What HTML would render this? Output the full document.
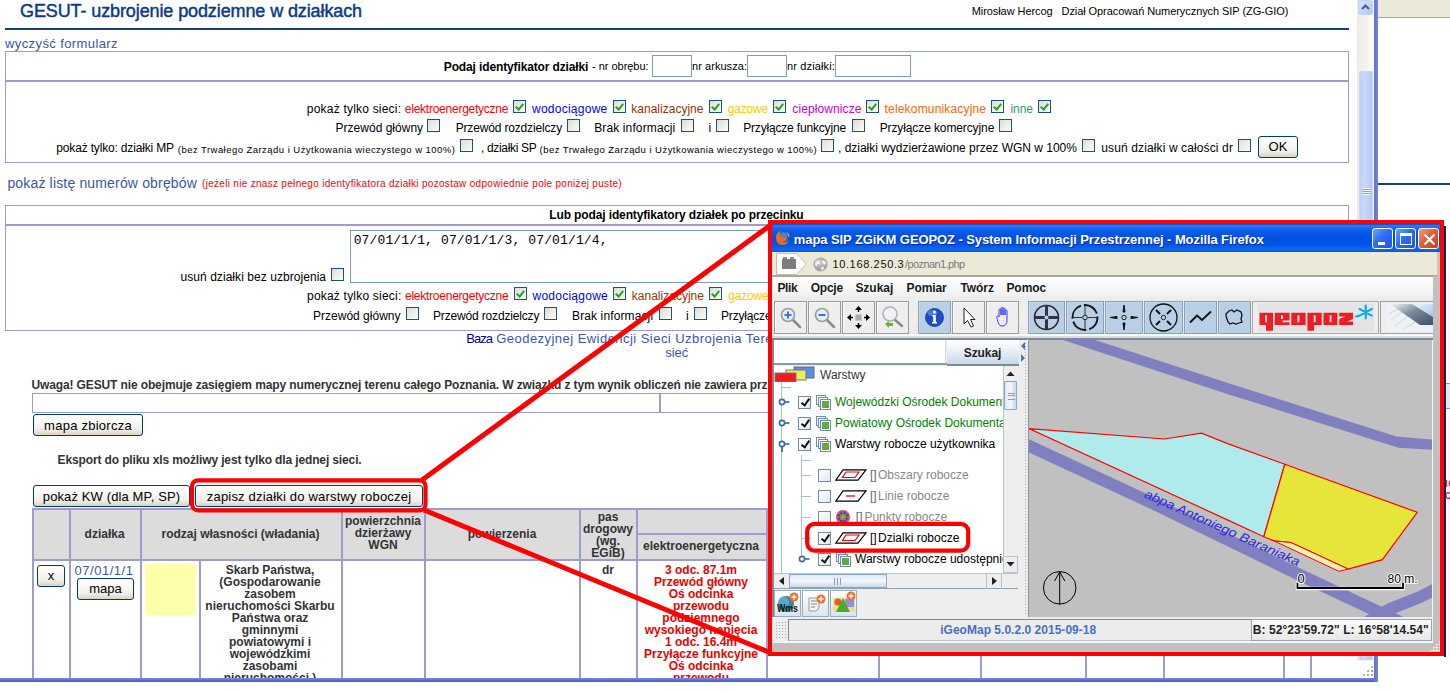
<!DOCTYPE html>
<html><head><meta charset="utf-8"><style>
html,body{margin:0;padding:0}
body{width:1450px;height:692px;position:relative;overflow:hidden;background:#fff;font-family:"Liberation Sans",sans-serif;color:#000}
.a{position:absolute}
.t{position:absolute;white-space:nowrap;line-height:1}
.cb{position:absolute;width:13px;height:13px;box-sizing:border-box;border:1px solid #1c5180;background:linear-gradient(135deg,#dcdcd7 0%,#ececE6 45%,#fbfbf9 100%)}
.cb.ck::after{content:"";position:absolute;left:3px;top:1px;width:3px;height:6px;border-right:2px solid #21a121;border-bottom:2px solid #21a121;transform:rotate(40deg)}
.btn{position:absolute;box-sizing:border-box;border:1px solid #003c74;border-radius:3px;background:linear-gradient(#fff 0%,#f7f6f2 45%,#eeede8 75%,#d8d2c6 100%);white-space:nowrap;text-align:center;color:#000}
.jcb{position:absolute;width:13px;height:13px;box-sizing:border-box;border:1px solid #7a8a99;background:linear-gradient(135deg,#fff 0%,#dde8f3 100%)}
.jcb.jck::after{content:"";position:absolute;left:4px;top:0px;width:3px;height:7px;border-right:2px solid #111;border-bottom:2px solid #111;transform:rotate(35deg)}
</style></head><body>
<div class="t" style="left:20.00px;top:2.06px;font-size:18px;color:#0b3a86;letter-spacing:-0.107px;-webkit-text-stroke:0.45px #0b3a86;">GESUT- uzbrojenie podziemne w działkach</div>
<div class="t" style="left:971.70px;top:5.69px;font-size:11px;letter-spacing:-0.070px;">Mirosław Hercog   Dział Opracowań Numerycznych SIP (ZG-GIO)</div>
<div class="a" style="left:5px;top:28px;width:1344px;height:2px;background:#1a3f7e;"></div>
<div class="t" style="left:5.00px;top:36.60px;font-size:13px;color:#3a56a8;letter-spacing:0.401px;">wyczyść formularz</div>
<div class="a" style="left:5px;top:51px;width:1344px;height:112px;border:1px solid #9c9ccf;box-sizing:border-box;"></div>
<div class="a" style="left:5px;top:80px;width:1344px;height:2px;background:#9c9ccf;"></div>
<div class="t" style="left:443.80px;top:60.54px;font-size:12px;font-weight:bold;letter-spacing:-0.131px;">Podaj identyfikator działki</div>
<div class="t" style="left:592.00px;top:61.39px;font-size:11px;letter-spacing:-0.022px;">- nr obrębu:</div>
<div class="a" style="left:652px;top:55px;width:40px;height:22px;border:1px solid #7f9db9;box-sizing:border-box;"></div>
<div class="t" style="left:692.00px;top:61.39px;font-size:11px;letter-spacing:0.054px;">nr arkusza:</div>
<div class="a" style="left:747px;top:55px;width:40px;height:22px;border:1px solid #7f9db9;box-sizing:border-box;"></div>
<div class="t" style="left:787.00px;top:61.39px;font-size:11px;letter-spacing:0.140px;">nr działki:</div>
<div class="a" style="left:835px;top:55px;width:76px;height:22px;border:1px solid #7f9db9;box-sizing:border-box;"></div>
<div class="t" style="left:306.80px;top:102.84px;font-size:12px;letter-spacing:0.208px;">pokaż tylko sieci: </div>
<div class="t" style="left:404.80px;top:102.84px;font-size:12px;color:#ff0000;letter-spacing:-0.246px;">elektroenergetyczne</div>
<div class="cb ck" style="left:513px;top:100px"></div>
<div class="t" style="left:532.00px;top:102.84px;font-size:12px;color:#0000ff;letter-spacing:0.253px;">wodociągowe</div>
<div class="cb ck" style="left:612.5px;top:100px"></div>
<div class="t" style="left:631.30px;top:102.84px;font-size:12px;color:#993300;letter-spacing:0.012px;">kanalizacyjne</div>
<div class="cb ck" style="left:708.5px;top:100px"></div>
<div class="t" style="left:727.70px;top:102.84px;font-size:12px;color:#ffcc00;letter-spacing:-0.177px;">gazowe</div>
<div class="cb ck" style="left:773px;top:100px"></div>
<div class="t" style="left:792.30px;top:102.84px;font-size:12px;color:#cc00cc;letter-spacing:0.097px;">ciepłownicze</div>
<div class="cb ck" style="left:866.4px;top:100px"></div>
<div class="t" style="left:884.60px;top:102.84px;font-size:12px;color:#ff6600;letter-spacing:0.169px;">telekomunikacyjne</div>
<div class="cb ck" style="left:991.2px;top:100px"></div>
<div class="t" style="left:1010.40px;top:102.84px;font-size:12px;color:#339966;letter-spacing:-0.022px;">inne</div>
<div class="cb ck" style="left:1038.3px;top:100px"></div>
<div class="t" style="left:335.60px;top:121.54px;font-size:12px;letter-spacing:0.009px;">Przewód główny</div>
<div class="cb" style="left:427px;top:119px"></div>
<div class="t" style="left:455.70px;top:121.54px;font-size:12px;letter-spacing:-0.162px;">Przewód rozdzielczy</div>
<div class="cb" style="left:566.8px;top:119px"></div>
<div class="t" style="left:594.20px;top:121.54px;font-size:12px;letter-spacing:0.123px;">Brak informacji</div>
<div class="cb" style="left:681px;top:119px"></div>
<div class="t" style="left:708.50px;top:121.54px;font-size:12px;">i</div>
<div class="cb" style="left:715.8px;top:119px"></div>
<div class="t" style="left:743.20px;top:121.54px;font-size:12px;letter-spacing:-0.176px;">Przyłącze funkcyjne</div>
<div class="cb" style="left:851.5px;top:119px"></div>
<div class="t" style="left:879.70px;top:121.54px;font-size:12px;letter-spacing:-0.110px;">Przyłącze komercyjne</div>
<div class="cb" style="left:999.2px;top:119px"></div>
<div class="t" style="left:56.30px;top:141.64px;font-size:12px;letter-spacing:-0.169px;">pokaż tylko: działki MP</div>
<div class="t" style="left:177.80px;top:144.56px;font-size:9.5px;letter-spacing:0.457px;">(bez Trwałego Zarządu i Użytkowania wieczystego w 100%)</div>
<div class="cb" style="left:459.6px;top:139px"></div>
<div class="t" style="left:481.00px;top:141.64px;font-size:12px;letter-spacing:-0.338px;">, działki SP</div>
<div class="t" style="left:539.60px;top:144.56px;font-size:9.5px;letter-spacing:0.457px;">(bez Trwałego Zarządu i Użytkowania wieczystego w 100%)</div>
<div class="cb" style="left:821px;top:139px"></div>
<div class="t" style="left:838.00px;top:141.64px;font-size:12px;letter-spacing:-0.013px;">, działki wydzierżawione przez WGN w 100%</div>
<div class="cb" style="left:1082px;top:139px"></div>
<div class="t" style="left:1101.30px;top:141.64px;font-size:12px;letter-spacing:0.119px;">usuń działki w całości dr</div>
<div class="cb" style="left:1237.8px;top:139px"></div>
<div class="btn" style="left:1258px;top:136px;width:40px;height:22px;font-size:13px;line-height:20px;letter-spacing:0px;">OK</div>
<div class="t" style="left:7.40px;top:176.05px;font-size:14px;color:#3a56a8;letter-spacing:0.163px;">pokaż listę numerów obrębów</div>
<div class="t" style="left:202.00px;top:179.44px;font-size:10px;color:#ff0000;letter-spacing:0.303px;">(jeżeli nie znasz pełnego identyfikatora działki pozostaw odpowiednie pole poniżej puste)</div>
<div class="a" style="left:5px;top:205px;width:1344px;height:126px;border:1px solid #9c9ccf;box-sizing:border-box;"></div>
<div class="a" style="left:5px;top:224px;width:1344px;height:2px;background:#9c9ccf;"></div>
<div class="t" style="left:549.30px;top:208.84px;font-size:12px;font-weight:bold;letter-spacing:-0.128px;">Lub podaj identyfikatory działek po przecinku</div>
<div class="t" style="left:180.50px;top:270.54px;font-size:12px;letter-spacing:0.056px;">usuń działki bez uzbrojenia</div>
<div class="cb" style="left:331px;top:268px"></div>
<div class="a" style="left:350px;top:230px;width:650px;height:53px;border:1px solid #7f9db9;box-sizing:border-box;"></div>
<div class="t" style="left:353.70px;top:233.84px;font-size:13px;font-family:'Liberation Mono',monospace;letter-spacing:0.136px;">07/01/1/1, 07/01/1/3, 07/01/1/4,</div>
<div class="t" style="left:307.00px;top:289.64px;font-size:12px;letter-spacing:0.208px;">pokaż tylko sieci: </div>
<div class="t" style="left:405.00px;top:289.64px;font-size:12px;color:#ff0000;letter-spacing:-0.246px;">elektroenergetyczne</div>
<div class="cb ck" style="left:513.5px;top:287px"></div>
<div class="t" style="left:532.50px;top:289.64px;font-size:12px;color:#0000ff;letter-spacing:0.253px;">wodociągowe</div>
<div class="cb ck" style="left:613px;top:287px"></div>
<div class="t" style="left:631.80px;top:289.64px;font-size:12px;color:#993300;letter-spacing:0.012px;">kanalizacyjne</div>
<div class="cb ck" style="left:709px;top:287px"></div>
<div class="t" style="left:728.20px;top:289.64px;font-size:12px;color:#ffcc00;letter-spacing:-0.177px;">gazowe</div>
<div class="cb ck" style="left:773.5px;top:287px"></div>
<div class="t" style="left:313.00px;top:309.54px;font-size:12px;letter-spacing:0.009px;">Przewód główny</div>
<div class="cb" style="left:405.6px;top:307px"></div>
<div class="t" style="left:433.00px;top:309.54px;font-size:12px;letter-spacing:-0.162px;">Przewód rozdzielczy</div>
<div class="cb" style="left:544px;top:307px"></div>
<div class="t" style="left:572.00px;top:309.54px;font-size:12px;letter-spacing:0.123px;">Brak informacji</div>
<div class="cb" style="left:659px;top:307px"></div>
<div class="t" style="left:686.00px;top:309.54px;font-size:12px;">i</div>
<div class="cb" style="left:693.5px;top:307px"></div>
<div class="t" style="left:721.00px;top:309.54px;font-size:12px;letter-spacing:-0.176px;">Przyłącze funkcyjne</div>
<div class="t" style="left:466.30px;top:332.30px;font-size:13px;color:#000099;letter-spacing:-0.983px;">Baza</div>
<div class="t" style="left:496.30px;top:332.30px;font-size:13px;color:#3a56a8;letter-spacing:0.456px;">Geodezyjnej Ewidencji Sieci Uzbrojenia Terenu</div>
<div class="t" style="left:665.24px;top:346.40px;font-size:13px;color:#3a56a8;">sieć</div>
<div class="t" style="left:31.40px;top:378.64px;font-size:12px;font-weight:bold;color:#333333;letter-spacing:-0.120px;">Uwaga! GESUT nie obejmuje zasięgiem mapy numerycznej terenu całego Poznania. W związku z tym wynik obliczeń nie zawiera przewodów</div>
<div class="a" style="left:32px;top:393px;width:1317px;height:20px;border:1px solid #9c9ccf;box-sizing:border-box;"></div>
<div class="a" style="left:659px;top:393px;width:2px;height:20px;background:#9c9ccf;"></div>
<div class="btn" style="left:33px;top:414px;width:110px;height:22px;font-size:13px;line-height:20px;letter-spacing:0.25px;padding-top:1px;">mapa zbiorcza</div>
<div class="t" style="left:57.60px;top:454.44px;font-size:12px;font-weight:bold;color:#333333;letter-spacing:-0.131px;">Eksport do pliku xls możliwy jest tylko dla jednej sieci.</div>
<div class="btn" style="left:33px;top:485px;width:157px;height:22px;font-size:13px;line-height:20px;letter-spacing:0.12px;padding-top:1px;">pokaż KW (dla MP, SP)</div>
<div class="btn" style="left:195px;top:485px;width:228px;height:22px;font-size:13px;line-height:20px;letter-spacing:0.19px;padding-top:1px;">zapisz działki do warstwy roboczej</div>
<div class="a" style="left:32px;top:508px;width:1346px;height:52px;background:#dcdcdc;"></div>
<div class="a" style="left:32px;top:508px;width:2px;height:172px;background:#9c9ccf;"></div>
<div class="a" style="left:69px;top:508px;width:2px;height:172px;background:#9c9ccf;"></div>
<div class="a" style="left:140px;top:508px;width:2px;height:172px;background:#9c9ccf;"></div>
<div class="a" style="left:341px;top:508px;width:2px;height:172px;background:#9c9ccf;"></div>
<div class="a" style="left:424px;top:508px;width:2px;height:172px;background:#9c9ccf;"></div>
<div class="a" style="left:579px;top:508px;width:2px;height:172px;background:#9c9ccf;"></div>
<div class="a" style="left:636px;top:508px;width:2px;height:172px;background:#9c9ccf;"></div>
<div class="a" style="left:766px;top:508px;width:2px;height:172px;background:#9c9ccf;"></div>
<div class="a" style="left:878px;top:508px;width:2px;height:172px;background:#9c9ccf;"></div>
<div class="a" style="left:980px;top:508px;width:2px;height:172px;background:#9c9ccf;"></div>
<div class="a" style="left:1085px;top:508px;width:2px;height:172px;background:#9c9ccf;"></div>
<div class="a" style="left:1163px;top:508px;width:2px;height:172px;background:#9c9ccf;"></div>
<div class="a" style="left:1283px;top:508px;width:2px;height:172px;background:#9c9ccf;"></div>
<div class="a" style="left:1310px;top:508px;width:2px;height:172px;background:#9c9ccf;"></div>
<div class="a" style="left:32px;top:508px;width:1346px;height:2px;background:#9c9ccf;"></div>
<div class="a" style="left:32px;top:559px;width:1346px;height:2px;background:#9c9ccf;"></div>
<div class="a" style="left:636px;top:533px;width:742px;height:2px;background:#9c9ccf;"></div>
<div class="a" style="left:199px;top:561px;width:2px;height:119px;background:#9c9ccf;"></div>
<div class="t" style="left:84.59px;top:527.54px;font-size:12px;font-weight:bold;color:#333;">działka</div>
<div class="t" style="left:161.48px;top:527.54px;font-size:12px;font-weight:bold;color:#333;">rodzaj własności (władania)</div>
<div class="t" style="left:344.99px;top:515.44px;font-size:12px;font-weight:bold;color:#333;">powierzchnia</div>
<div class="t" style="left:354.65px;top:527.34px;font-size:12px;font-weight:bold;color:#333;">dzierżawy</div>
<div class="t" style="left:368.34px;top:539.34px;font-size:12px;font-weight:bold;color:#333;">WGN</div>
<div class="t" style="left:467.66px;top:527.54px;font-size:12px;font-weight:bold;color:#333;">powierzenia</div>
<div class="t" style="left:597.66px;top:510.84px;font-size:12px;font-weight:bold;color:#333;">pas</div>
<div class="t" style="left:583.00px;top:522.84px;font-size:12px;font-weight:bold;color:#333;">drogowy</div>
<div class="t" style="left:596.00px;top:534.84px;font-size:12px;font-weight:bold;color:#333;">(wg.</div>
<div class="t" style="left:591.33px;top:546.84px;font-size:12px;font-weight:bold;color:#333;">EGiB)</div>
<div class="t" style="left:642.97px;top:539.84px;font-size:12px;font-weight:bold;color:#333;">elektroenergetyczna</div>
<div class="btn" style="left:37px;top:565px;width:28px;height:22px;font-size:13px;line-height:20px;letter-spacing:0px;">x</div>
<div class="t" style="left:74.50px;top:563.70px;font-size:13px;color:#3a56a8;letter-spacing:0.532px;">07/01/1/1</div>
<div class="btn" style="left:77px;top:578px;width:57px;height:22px;font-size:13px;line-height:20px;letter-spacing:0px;">mapa</div>
<div class="a" style="left:145px;top:564px;width:51px;height:51px;background:#ffffaa;"></div>
<div class="t" style="left:225.65px;top:563.74px;font-size:12px;font-weight:bold;color:#333;">Skarb Państwa,</div>
<div class="t" style="left:219.33px;top:575.74px;font-size:12px;font-weight:bold;color:#333;">(Gospodarowanie</div>
<div class="t" style="left:244.32px;top:587.74px;font-size:12px;font-weight:bold;color:#333;">zasobem</div>
<div class="t" style="left:205.31px;top:599.74px;font-size:12px;font-weight:bold;color:#333;">nieruchomości Skarbu</div>
<div class="t" style="left:231.65px;top:611.74px;font-size:12px;font-weight:bold;color:#333;">Państwa oraz</div>
<div class="t" style="left:241.66px;top:623.74px;font-size:12px;font-weight:bold;color:#333;">gminnymi</div>
<div class="t" style="left:228.99px;top:635.74px;font-size:12px;font-weight:bold;color:#333;">powiatowymi i</div>
<div class="t" style="left:229.66px;top:647.74px;font-size:12px;font-weight:bold;color:#333;">wojewódzkimi</div>
<div class="t" style="left:242.66px;top:659.74px;font-size:12px;font-weight:bold;color:#333;">zasobami</div>
<div class="t" style="left:223.66px;top:671.74px;font-size:12px;font-weight:bold;color:#333;">nieruchomości )</div>
<div class="t" style="left:602.00px;top:563.74px;font-size:12px;font-weight:bold;color:#333;">dr</div>
<div class="t" style="left:664.98px;top:563.74px;font-size:12px;font-weight:bold;color:#ee0000;">3 odc. 87.1m</div>
<div class="t" style="left:653.99px;top:575.74px;font-size:12px;font-weight:bold;color:#ee0000;">Przewód główny</div>
<div class="t" style="left:668.65px;top:587.74px;font-size:12px;font-weight:bold;color:#ee0000;">Oś odcinka</div>
<div class="t" style="left:673.00px;top:599.74px;font-size:12px;font-weight:bold;color:#ee0000;">przewodu</div>
<div class="t" style="left:662.33px;top:611.74px;font-size:12px;font-weight:bold;color:#ee0000;">podziemnego</div>
<div class="t" style="left:644.64px;top:623.74px;font-size:12px;font-weight:bold;color:#ee0000;">wysokiego napięcia</div>
<div class="t" style="left:664.98px;top:635.74px;font-size:12px;font-weight:bold;color:#ee0000;">1 odc. 16.4m</div>
<div class="t" style="left:643.97px;top:647.74px;font-size:12px;font-weight:bold;color:#ee0000;">Przyłącze funkcyjne</div>
<div class="t" style="left:668.65px;top:659.74px;font-size:12px;font-weight:bold;color:#ee0000;">Oś odcinka</div>
<div class="t" style="left:673.00px;top:671.74px;font-size:12px;font-weight:bold;color:#ee0000;">przewodu</div>
<div class="a" style="left:0px;top:678px;width:1378px;height:4px;background:linear-gradient(#7b8ae0,#4a58c0);"></div>
<div class="a" style="left:0px;top:682px;width:1450px;height:10px;background:#fff;"></div>
<div class="a" style="left:1357px;top:0px;width:17px;height:661px;background:linear-gradient(90deg,#eeede5,#f3f1ec 50%,#fdfdfb);"></div>
<div class="a" style="left:1358px;top:0px;width:15px;height:15px;background:linear-gradient(135deg,#d4e2fe,#b4c8f6);border:1px solid #c2d4fa;box-sizing:border-box;border-radius:2px;"><svg class="a" style="left:0;top:0" width="13" height="13"><path d="M3 8 L6.5 4.5 L10 8" fill="none" stroke="#4d6185" stroke-width="2"/></svg></div>
<div class="a" style="left:1359px;top:71px;width:14px;height:589px;background:linear-gradient(90deg,#b9cffa,#c8d8fc 40%,#b0c6f4);border-radius:2px;box-shadow:inset 0 0 0 1px #c4d6fc;"><div class="a" style="left:3px;top:117px;width:8px;height:7px;background:repeating-linear-gradient(#eef3fe 0 1px,#8aa4dc 1px 2px)"></div></div>
<div class="a" style="left:1362px;top:665px;width:11px;height:11px;background:radial-gradient(circle,#b0ab98 1px,transparent 1.2px) 0 0/4px 4px;clip-path:polygon(100% 0,100% 100%,0 100%)"></div>
<div class="a" style="left:1374px;top:0px;width:4px;height:682px;background:linear-gradient(90deg,#5d6fd6,#7686dc);"></div>
<div class="a" style="left:1378px;top:0px;width:72px;height:18px;background:#ece9d8;border-bottom:1px solid #aca899;box-sizing:border-box;"></div>
<div class="a" style="left:1378px;top:183px;width:72px;height:2px;background:#1a3f7e;"></div>
<div class="a" style="left:1445px;top:383px;width:5px;height:26px;background:#e8e8e8;border:1px solid #8c8cd0;border-right:none;box-sizing:border-box;"></div>
<div class="t" style="left:1445.00px;top:476.84px;font-size:12px;color:#cc0000;">ıc</div>
<div class="t" style="left:1445.00px;top:488.84px;font-size:12px;color:#cc0000;">ci</div>
<div class="a" style="left:1444px;top:226px;width:2px;height:431px;background:#0a246a;"></div>
<div class="a" style="left:768px;top:220px;width:676px;height:436px;background:#c0c0c0;"></div>
<div class="a" style="left:772px;top:224px;width:668px;height:28px;background:linear-gradient(#0842c8 0%,#2f7cf4 6%,#1a68f0 14%,#0758e8 30%,#0050e0 55%,#0056ea 75%,#0a68f6 90%,#0a5ad8 100%);"></div>
<svg class="a" style="left:775px;top:230px" width="15" height="15" viewBox="0 0 15 15"><circle cx="8" cy="7" r="6.2" fill="#2a62b8"/><circle cx="8.5" cy="6" r="3.5" fill="#4a9ae0" opacity="0.7"/><path d="M1 8 C1 3 4 1 6 1.5 C4.5 3 4.5 5 6 6.5 C7.5 8 10 8.5 12 7.5 C11.5 10 9.5 12 7 12 C9 13 12 12.5 14 10 C13 13.5 10.5 15 7.5 15 C3.5 15 1 12 1 8Z" fill="#ee6a1c"/><path d="M11 1.5 C13 2.5 14.5 4.5 14.5 7 L13 6 C13 4 12 2.5 11 1.5Z" fill="#f5b52a"/></svg>
<div class="t" style="left:793.80px;top:233.00px;font-size:13px;font-weight:bold;color:#fff;letter-spacing:-0.089px;text-shadow:1px 1px 0 #0a2a8c;">mapa SIP ZGiKM GEOPOZ - System Informacji Przestrzennej - Mozilla Firefox</div>
<div class="a" style="left:1372px;top:228px;width:21px;height:21px;background:linear-gradient(135deg,#6fa0ff 0%,#2d6ef5 45%,#1a56e8 100%);border:1px solid #fff;box-sizing:border-box;border-radius:3px;"><div class="a" style="left:5px;top:13px;width:7px;height:3px;background:#fff"></div></div>
<div class="a" style="left:1395px;top:228px;width:21px;height:21px;background:linear-gradient(135deg,#6fa0ff 0%,#2d6ef5 45%,#1a56e8 100%);border:1px solid #fff;box-sizing:border-box;border-radius:3px;"><div class="a" style="left:4px;top:4px;width:12px;height:12px;box-sizing:border-box;border:1px solid #fff;border-top:3px solid #fff"></div></div>
<div class="a" style="left:1418px;top:228px;width:21px;height:21px;background:linear-gradient(135deg,#f0a080 0%,#e0603a 45%,#c8401c 100%);border:1px solid #fff;box-sizing:border-box;border-radius:3px;"><svg class="a" style="left:0;top:0" width="21" height="21"><path d="M5.5 5.5 L15.5 15.5 M15.5 5.5 L5.5 15.5" stroke="#fff" stroke-width="2.2"/></svg></div>
<div class="a" style="left:772px;top:252px;width:668px;height:25px;background:#ece9d8;border-bottom:2px solid #aca899;box-sizing:border-box;"></div>
<div class="a" style="left:1437px;top:252px;width:3px;height:24px;background:#c8c5b5;"></div>
<svg class="a" style="left:775px;top:253px" width="34" height="23"><path d="M1.5 0.5 H21.5 L31 11 L21.5 21.5 H1.5 Z" fill="#fff" stroke="#c5c2b2"/><rect x="7" y="6" width="14" height="10" fill="#7d7d7d"/><rect x="8" y="4" width="4" height="2" fill="#8a8a8a"/><rect x="15" y="4" width="4" height="2" fill="#8a8a8a"/></svg>
<svg class="a" style="left:813px;top:257px" width="15" height="15"><circle cx="7.5" cy="7.5" r="7" fill="#a8a8a8"/><circle cx="6" cy="5.5" r="4" fill="#c8c8c8" opacity="0.8"/><path d="M2.5 5 L5 3.5 L7.5 4.5 L6.5 7 L4 7.5 L3.5 10 L2 8Z M9 3 L12 4 L13 7 L11 8 L9.5 6Z M8 10 L11 9.5 L10.5 12.5 L8.5 13Z" fill="#f0f0f0"/></svg>
<div class="t" style="left:832.40px;top:259.19px;font-size:11px;color:#111;letter-spacing:0.647px;">10.168.250.3</div>
<div class="t" style="left:905.00px;top:259.19px;font-size:11px;color:#7a7a7a;letter-spacing:-0.598px;">/poznan1.php</div>
<div class="a" style="left:772px;top:277px;width:661px;height:23px;background:linear-gradient(#ffffff,#f4f4f4 60%,#ebebeb);"></div>
<div class="a" style="left:772px;top:300px;width:661px;height:38px;background:linear-gradient(#ececec,#f0f0f0 50%,#e6e6e6);"></div>
<div class="a" style="left:1433px;top:276px;width:7px;height:380px;background:#c0c0c0;"></div>
<div class="t" style="left:777.40px;top:282.04px;font-size:12px;font-weight:bold;color:#1a1a1a;letter-spacing:-0.337px;">Plik</div>
<div class="t" style="left:810.70px;top:282.04px;font-size:12px;font-weight:bold;color:#1a1a1a;letter-spacing:-0.230px;">Opcje</div>
<div class="t" style="left:855.40px;top:282.04px;font-size:12px;font-weight:bold;color:#1a1a1a;letter-spacing:-0.020px;">Szukaj</div>
<div class="t" style="left:906.60px;top:282.04px;font-size:12px;font-weight:bold;color:#1a1a1a;letter-spacing:-0.131px;">Pomiar</div>
<div class="t" style="left:960.50px;top:282.04px;font-size:12px;font-weight:bold;color:#1a1a1a;letter-spacing:-0.095px;">Twórz</div>
<div class="t" style="left:1006.40px;top:282.04px;font-size:12px;font-weight:bold;color:#1a1a1a;letter-spacing:-0.042px;">Pomoc</div>
<div class="a" style="left:774px;top:301px;width:33px;height:33px;background:#eeeeee;border:1px solid #9a9a9a;box-sizing:border-box;box-shadow:inset 1px 1px 0 #fafafa;"></div>
<div class="a" style="left:808px;top:301px;width:33px;height:33px;background:#eeeeee;border:1px solid #9a9a9a;box-sizing:border-box;box-shadow:inset 1px 1px 0 #fafafa;"></div>
<div class="a" style="left:842px;top:301px;width:33px;height:33px;background:#eeeeee;border:1px solid #9a9a9a;box-sizing:border-box;box-shadow:inset 1px 1px 0 #fafafa;"></div>
<div class="a" style="left:876px;top:301px;width:33px;height:33px;background:#eeeeee;border:1px solid #9a9a9a;box-sizing:border-box;box-shadow:inset 1px 1px 0 #fafafa;"></div>
<div class="a" style="left:952px;top:301px;width:33px;height:33px;background:#eeeeee;border:1px solid #9a9a9a;box-sizing:border-box;box-shadow:inset 1px 1px 0 #fafafa;"></div>
<div class="a" style="left:986px;top:301px;width:33px;height:33px;background:#eeeeee;border:1px solid #9a9a9a;box-sizing:border-box;box-shadow:inset 1px 1px 0 #fafafa;"></div>
<div class="a" style="left:918px;top:301px;width:33px;height:33px;background:#b8cfe5;border:1px solid #8aa0b6;box-sizing:border-box;box-shadow:inset 1px 1px 0 #c8dbee;"></div>
<div class="a" style="left:1028px;top:301px;width:37px;height:33px;background:#b8cfe5;border:1px solid #8aa0b6;box-sizing:border-box;box-shadow:inset 1px 1px 0 #c8dbee;"></div>
<div class="a" style="left:1066px;top:301px;width:38px;height:33px;background:#b8cfe5;border:1px solid #8aa0b6;box-sizing:border-box;box-shadow:inset 1px 1px 0 #c8dbee;"></div>
<div class="a" style="left:1105px;top:301px;width:38px;height:33px;background:#b8cfe5;border:1px solid #8aa0b6;box-sizing:border-box;box-shadow:inset 1px 1px 0 #c8dbee;"></div>
<div class="a" style="left:1144px;top:301px;width:39px;height:33px;background:#b8cfe5;border:1px solid #8aa0b6;box-sizing:border-box;box-shadow:inset 1px 1px 0 #c8dbee;"></div>
<div class="a" style="left:1184px;top:301px;width:33px;height:33px;background:#b8cfe5;border:1px solid #8aa0b6;box-sizing:border-box;box-shadow:inset 1px 1px 0 #c8dbee;"></div>
<div class="a" style="left:1218px;top:301px;width:33px;height:33px;background:#b8cfe5;border:1px solid #8aa0b6;box-sizing:border-box;box-shadow:inset 1px 1px 0 #c8dbee;"></div>
<div class="a" style="left:774px;top:334px;width:659px;height:2px;background:#f9f9f9;"></div>
<div class="a" style="left:774px;top:336px;width:659px;height:2px;background:#dcdcdc;"></div>
<svg class="a" style="left:774px;top:301px" width="33" height="33" viewBox="0 0 33 33"><line x1="19" y1="19" x2="26" y2="26" stroke="#8a8a8a" stroke-width="2.5" stroke-linecap="round"/><circle cx="14" cy="14" r="6.5" fill="#e4ecf6" stroke="#9a9a9a" stroke-width="1.6"/><path d="M10.5 14 H17.5 M14 10.5 V17.5" stroke="#3d78c8" stroke-width="2"/></svg>
<svg class="a" style="left:808px;top:301px" width="33" height="33" viewBox="0 0 33 33"><line x1="19" y1="19" x2="26" y2="26" stroke="#8a8a8a" stroke-width="2.5" stroke-linecap="round"/><circle cx="14" cy="14" r="6.5" fill="#e4ecf6" stroke="#9a9a9a" stroke-width="1.6"/><path d="M10.5 14 H17.5" stroke="#3d78c8" stroke-width="2"/></svg>
<svg class="a" style="left:842px;top:301px" width="33" height="33" viewBox="0 0 33 33"><rect x="13.5" y="13.5" width="6" height="6" fill="#a8b0b0" stroke="#c8c8c8"/><path d="M16.5 5 L13 9 H20 Z M16.5 28 L13 24 H20 Z M5 16.5 L9 13 V20 Z M28 16.5 L24 13 V20 Z" fill="#000"/><path d="M16.5 8 V11 M16.5 22 V25 M8 16.5 H11 M22 16.5 H25" stroke="#000" stroke-width="1.5"/></svg>
<svg class="a" style="left:876px;top:301px" width="33" height="33" viewBox="0 0 33 33"><line x1="18" y1="18" x2="26" y2="25" stroke="#8a8a8a" stroke-width="2.5" stroke-linecap="round"/><circle cx="14" cy="13" r="7" fill="#eef2f8" stroke="#b0b0b0" stroke-width="1.5"/><path d="M9 23 L13 20 V22 H17 V25 H13 V27 Z" fill="#6cb33a"/></svg>
<svg class="a" style="left:918px;top:301px" width="33" height="33" viewBox="0 0 33 33"><circle cx="16.5" cy="16.5" r="9" fill="#1a4fc8"/><circle cx="16.5" cy="16.5" r="9" fill="none" stroke="#0c3290" stroke-width="0.8"/><ellipse cx="14.5" cy="12" rx="5" ry="3" fill="#6c9cf0" opacity="0.6"/><circle cx="16.5" cy="11" r="1.5" fill="#fff"/><path d="M14.5 14 H17.8 V21 H19 V22.5 H14 V21 H15.2 V15.5 H14.5Z" fill="#fff"/></svg>
<svg class="a" style="left:952px;top:301px" width="33" height="33" viewBox="0 0 33 33"><path d="M12 7 V23 L15.5 19.5 L19 26 L21.5 25 L18.5 18.5 H23 Z" fill="#fff" stroke="#222" stroke-width="1"/></svg>
<svg class="a" style="left:986px;top:301px" width="33" height="33" viewBox="0 0 33 33"><path d="M11 17 C10 15 12 14 13 16 V9 C13 7.5 15 7.5 15 9 V14 V7.5 C15 6 17 6 17 7.5 V14 V8 C17 6.5 19 6.5 19 8 V14 V10 C19 8.5 21 8.5 21 10 V19 C21 23 19 25 16 25 C13 25 12 22 11 17Z" fill="#e8ecf8" stroke="#3a3ae8" stroke-width="1"/></svg>
<svg class="a" style="left:1028px;top:301px" width="37" height="33" viewBox="0 0 37 33"><circle cx="18.5" cy="16.5" r="12" fill="none" stroke="#222" stroke-width="1.5"/><path d="M18.5 4 V29 M6 16.5 H31" stroke="#334" stroke-width="3"/><circle cx="18.5" cy="16.5" r="2" fill="#b8cfe5"/></svg>
<svg class="a" style="left:1066px;top:301px" width="38" height="33" viewBox="0 0 38 33"><circle cx="19" cy="16.5" r="12.5" fill="none" stroke="#111" stroke-width="1.9" stroke-dasharray="16.63 3" stroke-dashoffset="1.5"/><path d="M6.5 16.5 H16.5 M21.5 16.5 H31.5 M19 4 V14 M19 19 V29" stroke="#222" stroke-width="0.9"/><circle cx="19" cy="16.5" r="2.3" fill="#b8cfe5" stroke="#222" stroke-width="1"/></svg>
<svg class="a" style="left:1105px;top:301px" width="38" height="33" viewBox="0 0 38 33"><path d="M19 4 L20 11 H18Z M19 29 L20 22 H18Z M5 16.5 L12 15.5 V17.5Z M33 16.5 L26 15.5 V17.5Z" fill="#111" stroke="#111" stroke-width="1"/><circle cx="19" cy="16.5" r="2.2" fill="#b8cfe5" stroke="#222" stroke-width="1"/></svg>
<svg class="a" style="left:1144px;top:301px" width="39" height="33" viewBox="0 0 39 33"><circle cx="19.5" cy="16.5" r="13.5" fill="none" stroke="#111" stroke-width="1.3"/><path d="M12 9 L16 13 M27 9 L23 13 M12 24 L16 20 M27 24 L23 20" stroke="#111" stroke-width="2"/><circle cx="19.5" cy="16.5" r="2.2" fill="#b8cfe5" stroke="#222" stroke-width="1"/></svg>
<svg class="a" style="left:1184px;top:301px" width="33" height="33" viewBox="0 0 33 33"><path d="M6 21.5 L13 14.5 L18 19 L27 10.5" fill="none" stroke="#111" stroke-width="1.8"/></svg>
<svg class="a" style="left:1218px;top:301px" width="33" height="33" viewBox="0 0 33 33"><path d="M8 13 L11 10 L14 9 L16 11 L19 9 L23 11 L24 14 L23 18 L24 21 L21 22 L18 23 L15 22 L12 23 L10 21 L9 18 L8 15Z" fill="none" stroke="#111" stroke-width="1.3"/></svg>
<div class="a" style="left:1252px;top:301px;width:127px;height:33px;background:#ededed;border:1px solid #a8a8a8;box-sizing:border-box;"></div>
<div class="a" style="left:1258px;top:303px;width:116px;height:29px;background:#e4e4e4;"></div>
<svg class="a" style="left:1252px;top:301px" width="127" height="33"><path d="M7.5 11.8 H21.0 V29.7 H14.0 V24.0 H7.5Z M13.2 14.2 V21.3 H15.0 V14.2Z M22.7 11.8 H37.5 V19.5 H30.7 V21.3 H37.5 V24.0 H22.7Z M29.0 14.2 V18.0 H31.0 V14.2Z M39.3 11.8 H53.6 V24.0 H39.3Z M45.5 14.2 V21.3 H47.4 V14.2Z M55.4 11.8 H69.7 V24.0 H62.1 V29.7 H55.4Z M61.7 14.2 V21.3 H63.6 V14.2Z M71.5 11.8 H85.4 V24.0 H71.5Z M77.6 14.2 V21.3 H79.5 V14.2Z M87.2 11.8 H101.1 V18.0 L95.0 20.5 H101.1 V24.0 H87.2 V18.0 L93.5 15.5 H87.2Z" fill="#ee1c24" fill-rule="evenodd"/><path d="M113.7 4.5 V17.5 M107.6 8 L119.8 14.6 M119.8 8 L107.6 14.6 M107.6 14.6 L104 15.5" stroke="#10aaee" stroke-width="2.2" stroke-linecap="round"/></svg>
<div class="a" style="left:1380px;top:301px;width:53px;height:33px;background:#eeeeee;border:1px solid #a0a0a0;box-sizing:border-box;border-right:none;"></div>
<svg class="a" style="left:1381px;top:302px" width="52" height="31"><rect x="6" y="2" width="46" height="28" fill="#eef1f5"/><path d="M10 18 L24 8 M14 24 L30 12 M22 28 L40 16 M8 12 L18 6" stroke="#c8d0dc" stroke-width="0.8"/><defs><linearGradient id="gdk" x1="0" y1="0" x2="1" y2="1"><stop offset="0" stop-color="#f4f6f8"/><stop offset="0.45" stop-color="#7a8a9e"/><stop offset="1" stop-color="#3e5068"/></linearGradient><linearGradient id="gbl" x1="0" y1="0" x2="1" y2="1"><stop offset="0" stop-color="#f0f4fa"/><stop offset="1" stop-color="#a8c4e8"/></linearGradient></defs><path d="M9 2 L52 2 L52 23 L39 23 Z" fill="url(#gdk)"/><path d="M31 2 L52 2 L52 15 Z" fill="url(#gbl)"/></svg>
<div class="a" style="left:772px;top:338px;width:661px;height:2px;background:#7a8a99;"></div>
<div class="a" style="left:772px;top:340px;width:256px;height:316px;background:#eeeeee;"></div>
<div class="a" style="left:774px;top:340px;width:172px;height:24px;background:#fff;border-right:1px solid #d8d8d8;border-bottom:1px solid #d8d8d8;box-sizing:border-box;"></div>
<div class="a" style="left:774px;top:363px;width:245px;height:2px;background:#8a9aaa;"></div>
<div class="a" style="left:947px;top:340px;width:72px;height:25px;background:linear-gradient(#ffffff 0%,#eef3f9 35%,#c6d6e8 100%);"></div>
<div class="a" style="left:947px;top:364px;width:72px;height:2px;background:#7a8a99;"></div>
<div class="t" style="left:963.75px;top:346.54px;font-size:12px;font-weight:bold;color:#222;letter-spacing:-0.086px;">Szukaj</div>
<div class="a" style="left:772px;top:340px;width:2px;height:316px;background:#7a8a99;"></div>
<div class="a" style="left:774px;top:366px;width:229px;height:207px;background:#fff;"></div>
<div class="a" style="left:1003px;top:366px;width:15px;height:207px;background:#eeeeee;border-left:1px solid #b8c4d0;box-sizing:border-box;"></div>
<svg class="a" style="left:1003px;top:366px" width="15" height="15"><path d="M3.5 10 L7.5 5.5 L11.5 10Z" fill="#222"/></svg>
<div class="a" style="left:1004px;top:381px;width:13px;height:29px;background:linear-gradient(90deg,#dce8f6,#f4f8fc 50%,#c8d8ec);border:1px solid #8aa6c8;box-sizing:border-box;border-radius:1px;"><div class="a" style="left:3px;top:11px;width:7px;height:5px;border-top:1px solid #7fa0c8;border-bottom:1px solid #7fa0c8;"></div><div class="a" style="left:3px;top:13px;width:7px;height:1px;background:#7fa0c8"></div></div>
<div class="a" style="left:1003px;top:556px;width:15px;height:17px;background:#eeeeee;border:1px solid #b8c4d0;box-sizing:border-box;"></div>
<svg class="a" style="left:1003px;top:556px" width="15" height="17"><path d="M3.5 6 L7.5 10.5 L11.5 6Z" fill="#222"/></svg>
<div class="a" style="left:774px;top:573px;width:244px;height:16px;background:#eeeeee;border-top:1px solid #b8c4d0;border-bottom:1px solid #8aa0b6;box-sizing:border-box;"></div>
<svg class="a" style="left:774px;top:573px" width="15" height="16"><path d="M10 4 L5 8 L10 12Z" fill="#222"/></svg>
<div class="a" style="left:789px;top:574px;width:98px;height:14px;background:linear-gradient(#dce8f6,#f4f8fc 50%,#c8d8ec);border:1px solid #8aa6c8;box-sizing:border-box;"><div class="a" style="left:44px;top:3px;width:1px;height:7px;background:#7fa0c8"></div><div class="a" style="left:47px;top:3px;width:1px;height:7px;background:#7fa0c8"></div><div class="a" style="left:50px;top:3px;width:1px;height:7px;background:#7fa0c8"></div></div>
<div class="a" style="left:986px;top:573px;width:16px;height:16px;border:1px solid #b8c4d0;box-sizing:border-box;border-top:none;border-bottom:none;"></div>
<svg class="a" style="left:987px;top:573px" width="15" height="16"><path d="M5 4 L10 8 L5 12Z" fill="#222"/></svg>
<div class="a" style="left:774px;top:590px;width:27px;height:27px;background:linear-gradient(#ffffff,#d8e4f0);border:1px solid #9aaabb;box-sizing:border-box;"></div>
<div class="a" style="left:802px;top:590px;width:27px;height:27px;background:linear-gradient(#ffffff,#d8e4f0);border:1px solid #9aaabb;box-sizing:border-box;"></div>
<div class="a" style="left:830px;top:590px;width:27px;height:27px;background:linear-gradient(#ffffff,#d8e4f0);border:1px solid #9aaabb;box-sizing:border-box;"></div>
<svg class="a" style="left:774px;top:590px" width="27" height="27"><circle cx="12" cy="14" r="8" fill="#3a8a8a"/><circle cx="10" cy="12" r="5" fill="#5aa8d0"/><text x="3" y="22" font-family="Liberation Sans" font-size="10" font-weight="bold" fill="#111" textLength="21" lengthAdjust="spacingAndGlyphs">Wms</text><circle cx="20" cy="7" r="4.5" fill="#f07030"/><path d="M17.5 7 H22.5 M20 4.5 V9.5" stroke="#fff" stroke-width="1.5"/></svg>
<svg class="a" style="left:802px;top:590px" width="27" height="27"><path d="M7 8 H17 V18 L14 21 H7Z" fill="#f4f4f4" stroke="#999"/><path d="M9 11 H15 M9 14 H15 M9 17 H13" stroke="#888"/><circle cx="19" cy="9" r="4.5" fill="#f07030"/><path d="M16.5 9 H21.5 M19 6.5 V11.5" stroke="#fff" stroke-width="1.5"/></svg>
<svg class="a" style="left:830px;top:590px" width="27" height="27"><rect x="3" y="8" width="22" height="14" fill="#e8e090"/><rect x="15" y="9" width="9" height="8" fill="#9090e0"/><circle cx="8" cy="12" r="3.5" fill="#e06020"/><path d="M13 8 L20 22 H6Z" fill="#50a830"/><circle cx="21" cy="6" r="4.5" fill="#f07030"/><path d="M18.5 6 H23.5 M21 3.5 V8.5" stroke="#fff" stroke-width="1.5"/></svg>
<div class="a" style="left:1019px;top:340px;width:9px;height:277px;background:#eeeeee;"></div>
<div class="a" style="left:1024px;top:342px;width:2px;height:274px;background:radial-gradient(circle,#9aa8b8 0.8px,transparent 1px) 0 0/3px 3px"></div>
<svg class="a" style="left:1019px;top:341px" width="8" height="24"><path d="M6 1 L2 5 L6 9Z M2 13 L6 17 L2 21Z" fill="#4a74c0"/></svg>
<div class="a" style="left:1027px;top:339px;width:1px;height:278px;background:#e8e8e8;"></div>
<div class="a" style="left:1028px;top:339px;width:1px;height:278px;background:#8a96a4;"></div>
<div class="a" style="left:772px;top:617px;width:661px;height:35px;background:#eeeeee;"></div>
<div class="a" style="left:775px;top:621px;width:12px;height:19px;background:radial-gradient(circle,#a0a8b0 0.8px,transparent 1px) 0 0/3px 3px"></div>
<div class="a" style="left:788px;top:619px;width:463px;height:22px;background:#ececec;border:1px solid #7a8a99;box-sizing:border-box;border-right:none;border-bottom-color:#b8c4d0;"></div>
<div class="t" style="left:940.20px;top:624.34px;font-size:12px;font-weight:bold;color:#4a70c0;letter-spacing:0.022px;">iGeoMap 5.0.2.0 2015-09-18</div>
<div class="a" style="left:1251px;top:619px;width:181px;height:22px;background:linear-gradient(#fafafa,#e8e8e8);border:1px solid #9aa4ae;box-sizing:border-box;"></div>
<div class="t" style="left:1252.80px;top:624.34px;font-size:12px;font-weight:bold;color:#222;letter-spacing:0.060px;">B: 52°23&#x27;59.72&quot; L: 16°58&#x27;14.54&quot;</div>
<div class="a" style="left:772px;top:641px;width:668px;height:11px;background:#c0c0c0;"></div>
<div class="a" style="left:772px;top:641px;width:661px;height:2px;background:#f4f4f4;"></div>
<div class="a" style="left:1429px;top:640px;width:11px;height:12px;background:radial-gradient(circle,#f8f8f8 0.9px,transparent 1.1px) 0 0/3px 3px;clip-path:polygon(100% 0,100% 100%,0 100%)"></div>
<div class="a" style="left:0;top:0;width:1450px;height:692px;clip-path:polygon(774px 366px,1003px 366px,1003px 573px,774px 573px)"><svg class="a" style="left:774px;top:366px" width="44" height="16"><rect x="20" y="1" width="20" height="11" fill="#5b8ee6" stroke="#666"/><rect x="12" y="4" width="20" height="10" fill="#f0ec58" stroke="#777"/><rect x="1" y="7" width="21" height="9" fill="#ee1c1c" stroke="#777"/></svg>
<div class="t" style="left:820.00px;top:368.64px;font-size:12px;color:#333;">Warstwy</div>
<div class="a" style="left:781px;top:382px;width:1px;height:191px;background:#a8c0dc;"></div>
<div class="a" style="left:782px;top:387px;width:9px;height:1px;background:#a8c0dc;"></div>
<div class="a" style="left:782px;top:402px;width:7px;height:1px;background:#a8c0dc;"></div>
<svg class="a" style="left:778px;top:397px" width="16" height="14"><circle cx="4" cy="5" r="2.6" fill="#fff" stroke="#3f68b0" stroke-width="1.6"/><path d="M6.5 5 H11.5" stroke="#3f68b0" stroke-width="1.6"/></svg>
<div class="jcb jck" style="left:798px;top:396px"></div>
<svg class="a" style="left:816px;top:395px" width="15" height="15"><rect x="0.5" y="0.5" width="9" height="9" fill="#fff" stroke="#6a8cc0"/><rect x="2.5" y="2.5" width="9" height="9" fill="#fff" stroke="#6a8cc0"/><rect x="4.5" y="4.5" width="10" height="10" fill="#fff" stroke="#6a8cc0"/><rect x="6" y="6" width="7" height="7" fill="#5cb040"/><rect x="8.5" y="11" width="2" height="2" fill="#c87020"/></svg>
<div class="t" style="left:835.00px;top:396.14px;font-size:12px;color:#008000;">Wojewódzki Ośrodek Dokumentacji</div>
<div class="a" style="left:782px;top:423px;width:7px;height:1px;background:#a8c0dc;"></div>
<svg class="a" style="left:778px;top:418px" width="16" height="14"><circle cx="4" cy="5" r="2.6" fill="#fff" stroke="#3f68b0" stroke-width="1.6"/><path d="M6.5 5 H11.5" stroke="#3f68b0" stroke-width="1.6"/></svg>
<div class="jcb jck" style="left:798px;top:417px"></div>
<svg class="a" style="left:816px;top:416px" width="15" height="15"><rect x="0.5" y="0.5" width="9" height="9" fill="#fff" stroke="#6a8cc0"/><rect x="2.5" y="2.5" width="9" height="9" fill="#fff" stroke="#6a8cc0"/><rect x="4.5" y="4.5" width="10" height="10" fill="#fff" stroke="#6a8cc0"/><rect x="6" y="6" width="7" height="7" fill="#5cb040"/><rect x="8.5" y="11" width="2" height="2" fill="#c87020"/></svg>
<div class="t" style="left:835.00px;top:417.14px;font-size:12px;color:#008000;">Powiatowy Ośrodek Dokumentacji</div>
<div class="a" style="left:782px;top:444px;width:7px;height:1px;background:#a8c0dc;"></div>
<svg class="a" style="left:778px;top:439px" width="16" height="14"><circle cx="4" cy="5" r="2.6" fill="#fff" stroke="#3f68b0" stroke-width="1.6"/><path d="M6.5 5 H11.5" stroke="#3f68b0" stroke-width="1.6"/><path d="M4 7.5 V13" stroke="#3f68b0" stroke-width="1.8"/></svg>
<div class="jcb jck" style="left:798px;top:438px"></div>
<svg class="a" style="left:816px;top:437px" width="15" height="15"><rect x="0.5" y="0.5" width="9" height="9" fill="#fff" stroke="#6a8cc0"/><rect x="2.5" y="2.5" width="9" height="9" fill="#fff" stroke="#6a8cc0"/><rect x="4.5" y="4.5" width="10" height="10" fill="#fff" stroke="#6a8cc0"/><rect x="6" y="6" width="7" height="7" fill="#5cb040"/><rect x="8.5" y="11" width="2" height="2" fill="#c87020"/></svg>
<div class="t" style="left:835.00px;top:438.14px;font-size:12px;">Warstwy robocze użytkownika</div>
<div class="a" style="left:801px;top:455px;width:1px;height:105px;background:#a8c0dc;"></div>
<div class="a" style="left:802px;top:460px;width:9px;height:1px;background:#a8c0dc;"></div>
<div class="a" style="left:802px;top:475px;width:9px;height:1px;background:#a8c0dc;"></div>
<div class="a" style="left:802px;top:496px;width:9px;height:1px;background:#a8c0dc;"></div>
<div class="a" style="left:802px;top:517px;width:9px;height:1px;background:#a8c0dc;"></div>
<div class="a" style="left:802px;top:538px;width:9px;height:1px;background:#a8c0dc;"></div>
<div class="jcb" style="left:818px;top:469px"></div>
<svg class="a" style="left:835px;top:469px" width="32" height="12"><path d="M8 0.8 H31 L23 11.2 H0.8 Z" fill="#fff" stroke="#000" stroke-width="1.2"/><path d="M11 3 H24 L20 8.5 H7.5 Z" fill="none" stroke="#e00" stroke-width="1.2"/></svg>
<div class="t" style="left:870.00px;top:469.34px;font-size:12px;color:#666;">[]</div>
<div class="t" style="left:878.00px;top:469.34px;font-size:12px;color:#888;">Obszary robocze</div>
<div class="jcb" style="left:818px;top:490px"></div>
<svg class="a" style="left:835px;top:490px" width="32" height="12"><path d="M8 0.8 H31 L23 11.2 H0.8 Z" fill="#fff" stroke="#000" stroke-width="1.2"/><path d="M11 6 H20" stroke="#e00" stroke-width="1.3"/></svg>
<div class="t" style="left:870.00px;top:490.34px;font-size:12px;color:#666;">[]</div>
<div class="t" style="left:878.00px;top:490.34px;font-size:12px;color:#888;">Linie robocze</div>
<div class="jcb" style="left:818px;top:511px"></div>
<svg class="a" style="left:835px;top:509px" width="16" height="16"><circle cx="8" cy="8" r="7" fill="#c04080"/><circle cx="8" cy="8" r="5" fill="#4040c0"/><circle cx="8" cy="8" r="3" fill="#60a040"/><path d="M1 8 H15 M8 1 V15 M3 3 L13 13 M13 3 L3 13" stroke="#c8a020" stroke-width="0.8"/></svg>
<div class="t" style="left:855.80px;top:511.34px;font-size:12px;color:#666;">[]</div>
<div class="t" style="left:864.40px;top:511.34px;font-size:12px;color:#888;">Punkty robocze</div>
<div class="jcb jck" style="left:818px;top:532px"></div>
<svg class="a" style="left:835px;top:532px" width="32" height="12"><path d="M8 0.8 H31 L23 11.2 H0.8 Z" fill="#fff" stroke="#000" stroke-width="1.2"/><path d="M11 3 H24 L20 8.5 H7.5 Z" fill="none" stroke="#e00" stroke-width="1.2"/></svg>
<div class="t" style="left:870.00px;top:532.34px;font-size:12px;">[]</div>
<div class="t" style="left:878.00px;top:532.34px;font-size:12px;">Dzialki robocze</div>
<svg class="a" style="left:798px;top:554px" width="16" height="14"><circle cx="4" cy="5" r="2.6" fill="#fff" stroke="#3f68b0" stroke-width="1.6"/><path d="M6.5 5 H11.5" stroke="#3f68b0" stroke-width="1.6"/></svg>
<div class="jcb jck" style="left:818px;top:553px"></div>
<svg class="a" style="left:836px;top:552px" width="15" height="15"><rect x="0.5" y="0.5" width="9" height="9" fill="#fff" stroke="#6a8cc0"/><rect x="2.5" y="2.5" width="9" height="9" fill="#fff" stroke="#6a8cc0"/><rect x="4.5" y="4.5" width="10" height="10" fill="#fff" stroke="#6a8cc0"/><rect x="6" y="6" width="7" height="7" fill="#5cb040"/><rect x="8.5" y="11" width="2" height="2" fill="#c87020"/></svg>
<div class="t" style="left:855.00px;top:553.34px;font-size:12px;">Warstwy robocze udostępnione</div>
</div><svg class="a" style="left:1029px;top:340px" width="403" height="277" viewBox="1029 340 403 277"><rect x="1029" y="340" width="403" height="277" fill="#c0c0c0"/><path d="M1059.9 339 L1228 394.3 L1398.5 447.7 L1432 449.8 L1432 439.4 L1396.4 436.5 L1228 383 L1092 339Z" fill="#8080c0"/><path d="M1010 437 L1150 502 L1300 575 L1400 622 L1450 646" fill="none" stroke="#8080c0" stroke-width="12"/><path d="M1450 582 L1420 597 L1390 609 L1350 632" fill="none" stroke="#8080c0" stroke-width="12"/><path d="M1029 428.6 L1164.5 439 L1201.5 433.2 L1227.6 443.6 L1284.8 464.3 L1263.8 536.7 L1228 520.1 Z" fill="#afebeb" stroke="#ff0000" stroke-width="1.2"/><path d="M1284.8 464.3 L1417.3 512.3 L1382.4 559.7 L1348.2 569.1 L1291 542.6 L1274 540.9 L1263.8 536.7 Z" fill="#e6e63a" stroke="#ff0000" stroke-width="1.2"/><path d="M1274 540.9 L1291 542.6 L1348.2 569.1 L1338.9 571.3 Z" fill="#f0f0b0" stroke="#ff0000" stroke-width="1"/><text x="0" y="0" transform="translate(1143.4 497) rotate(24.2)" font-family="Liberation Sans" font-style="italic" font-size="12.5" fill="#2828e8" textLength="169" lengthAdjust="spacingAndGlyphs">abpa Antoniego Baraniaka</text><circle cx="1059.7" cy="587.8" r="16.3" fill="none" stroke="#000" stroke-width="1"/><path d="M1059.7 572 V604.5 M1054.5 581 L1059.7 572 L1064.9 581" fill="none" stroke="#000" stroke-width="1"/><path d="M1297.5 583 V588.5 H1403 V583" fill="none" stroke="#fff" stroke-width="3.5"/><path d="M1297.5 583 V588 H1403 V583" fill="none" stroke="#000" stroke-width="1.8"/><text x="1297.5" y="583" font-family="Liberation Sans" font-size="13" fill="#000" stroke="#fff" stroke-width="2" paint-order="stroke">0</text><text x="1387.5" y="583" font-family="Liberation Sans" font-size="13" fill="#000" stroke="#fff" stroke-width="2" paint-order="stroke" textLength="30" lengthAdjust="spacingAndGlyphs">80 m.</text></svg>
<div class="a" style="left:1432px;top:340px;width:1px;height:277px;background:#f4f4f4;"></div>
<svg class="a" style="left:0;top:0" width="1450" height="692"><path d="M422 480 L772 224" stroke="#ff0000" stroke-width="5"/><path d="M424 510 L771 653" stroke="#ff0000" stroke-width="5"/><rect x="192" y="480.3" width="233.5" height="30" rx="6" fill="none" stroke="#ff0000" stroke-width="4.2"/><rect x="807.2" y="523.9" width="161" height="26.7" rx="7.5" fill="none" stroke="#ff0000" stroke-width="4.2"/><path d="M770 222 H1442 V654 H770 Z" fill="none" stroke="#ff0000" stroke-width="4"/></svg>
</body></html>
